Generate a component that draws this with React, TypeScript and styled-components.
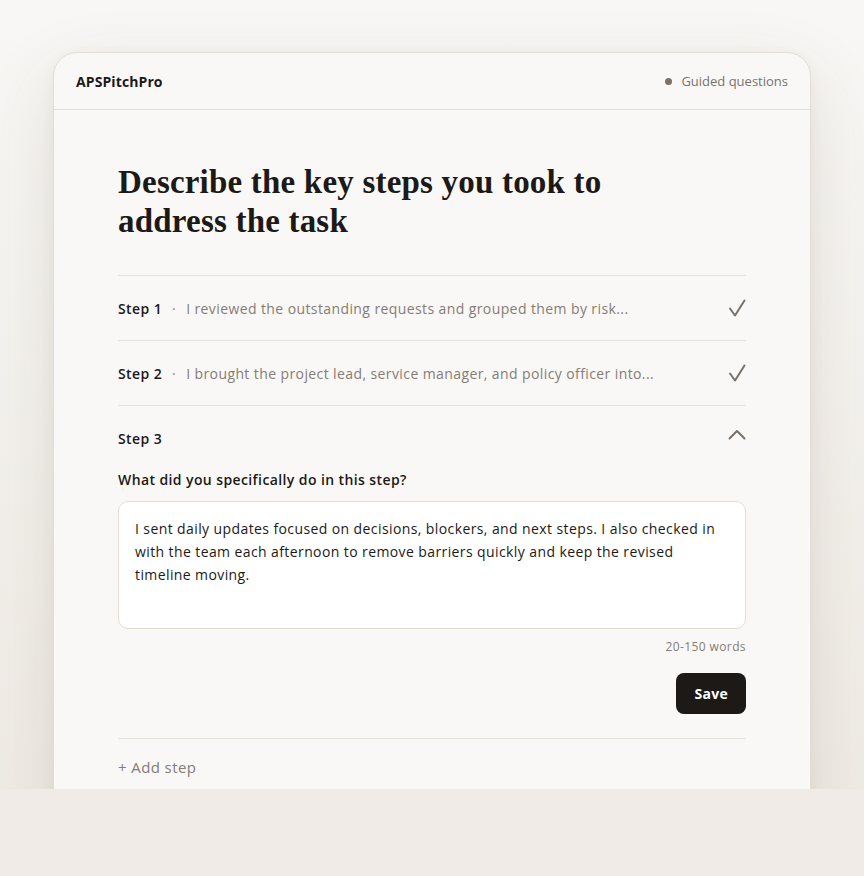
import React from 'react'
import styled, { createGlobalStyle } from 'styled-components'

const GlobalStyle = createGlobalStyle`
  html {
    background: #f0ebe6;
  }
  body {
    margin: 0;
    font-family: 'Open Sans', 'Liberation Sans', sans-serif;
    color: #1c1917;
  }
  * {
    box-sizing: border-box;
  }
`

const steps = [
  { label: 'Step 1', preview: 'I reviewed the outstanding requests and grouped them by risk...' },
  { label: 'Step 2', preview: 'I brought the project lead, service manager, and policy officer into...' },
]

const CheckMark = () => (
  <svg width="18" height="18" viewBox="0 0 18 18" fill="none" stroke="currentColor" strokeWidth="2" strokeLinecap="round" strokeLinejoin="round">
    <path d="M2 9.5 L7 16.5 L16.5 1.5" />
  </svg>
)

const Chevron = () => (
  <svg width="18" height="11" viewBox="0 0 18 11" fill="none" stroke="currentColor" strokeWidth="2" strokeLinecap="round" strokeLinejoin="round">
    <path d="M1.5 9.5 L9 2 L16.5 9.5" />
  </svg>
)

export default function App() {
  return (
    <>
      <GlobalStyle />
      <Page>
        <Card>
          <Header>
            <Brand>APSPitchPro</Brand>
            <Mode>
              <Dot />
              Guided questions
            </Mode>
          </Header>
          <Body>
            <Title>Describe the key steps you took to address the task</Title>
            <StepList>
              {steps.map((step) => (
                <StepRow key={step.label}>
                  <StepLabel>{step.label}</StepLabel>
                  <Sep>·</Sep>
                  <Preview>{step.preview}</Preview>
                  <IconSlot>
                    <CheckMark />
                  </IconSlot>
                </StepRow>
              ))}
              <OpenStep>
                <StepRow as="div" $bare>
                  <StepLabel>Step 3</StepLabel>
                  <Spacer />
                  <IconSlot $up>
                    <Chevron />
                  </IconSlot>
                </StepRow>
                <Question>What did you specifically do in this step?</Question>
                <Answer
                  defaultValue="I sent daily updates focused on decisions, blockers, and next steps. I also checked in with the team each afternoon to remove barriers quickly and keep the revised timeline moving."
                />
                <Counter>20-150 words</Counter>
                <Actions>
                  <SaveButton>Save</SaveButton>
                </Actions>
              </OpenStep>
              <AddStep>+ Add step</AddStep>
            </StepList>
          </Body>
        </Card>
      </Page>
    </>
  )
}

const Page = styled.div`
  height: 789px;
  overflow: hidden;
  padding-top: 52px;
  background: linear-gradient(180deg, #f8f7f5 0%, #f4f2ee 45%, #efebe5 100%);
`

const Card = styled.div`
  width: 758px;
  margin: 0 auto;
  background: #f9f8f6;
  border: 1px solid #e4ddd3;
  border-radius: 24px;
  box-shadow: 0 24px 70px rgba(90, 70, 45, 0.13), 0 4px 14px rgba(90, 70, 45, 0.05);
`

const Header = styled.div`
  display: flex;
  align-items: center;
  justify-content: space-between;
  height: 57px;
  padding: 0 22px;
  border-bottom: 1px solid #e4ddd3;
`

const Brand = styled.div`
  font-size: 14px;
  font-weight: 700;
  letter-spacing: 0.1px;
`

const Mode = styled.div`
  display: flex;
  align-items: center;
  gap: 9px;
  font-size: 13px;
  color: #7a716a;
`

const Dot = styled.span`
  width: 7px;
  height: 7px;
  border-radius: 50%;
  background: #7a716a;
`

const Body = styled.div`
  padding: 53px 64px 80px;
`

const Title = styled.h1`
  margin: 0 0 34px;
  max-width: 520px;
  font-family: 'Liberation Serif', 'DejaVu Serif', serif;
  font-size: 33px;
  line-height: 39px;
  font-weight: 700;
  letter-spacing: 0.2px;
  color: #1c1917;
`

const StepList = styled.div`
  display: flex;
  flex-direction: column;
  letter-spacing: 0.4px;
`

const StepRow = styled.div<{ $bare?: boolean }>`
  display: flex;
  align-items: center;
  height: ${(p) => (p.$bare ? '64px' : '65px')};
  border-top: ${(p) => (p.$bare ? 'none' : '1px solid #e6e1da')};
`

const StepLabel = styled.span`
  font-size: 14px;
  font-weight: 600;
  color: #1c1917;
  white-space: nowrap;
`

const Sep = styled.span`
  margin: 0 10px;
  color: #8a817a;
  font-size: 14px;
`

const Preview = styled.span`
  flex: 1;
  font-size: 14px;
  color: #857c75;
  white-space: nowrap;
  overflow: hidden;
`

const Spacer = styled.span`
  flex: 1;
`

const IconSlot = styled.span<{ $up?: boolean }>`
  display: flex;
  color: #7a716a;
  margin-right: 0;
  margin-top: ${(p) => (p.$up ? '-8px' : '0')};
`

const OpenStep = styled.div`
  display: flex;
  flex-direction: column;
  border-top: 1px solid #e6e1da;
  border-bottom: 1px solid #e6e1da;
  padding-bottom: 24px;
`

const Question = styled.label`
  font-size: 14px;
  line-height: 20px;
  font-weight: 600;
  color: #1c1917;
`

const Answer = styled.textarea`
  margin-top: 11px;
  height: 128px;
  padding: 15px 16px;
  border: 1px solid #e4ddd3;
  border-radius: 10px;
  background: #ffffff;
  font-family: inherit;
  font-size: 14px;
  line-height: 23px;
  letter-spacing: 0.4px;
  color: #1c1917;
  resize: none;
  outline: none;
`

const Counter = styled.div`
  margin-top: 10px;
  text-align: right;
  font-size: 12px;
  line-height: 16px;
  color: #857c75;
`

const Actions = styled.div`
  display: flex;
  justify-content: flex-end;
  margin-top: 18px;
`

const SaveButton = styled.button`
  height: 41px;
  padding: 0 18px;
  border: none;
  border-radius: 8px;
  background: #1c1917;
  color: #ffffff;
  font-family: inherit;
  font-size: 14px;
  font-weight: 700;
  letter-spacing: 0.3px;
  cursor: pointer;
`

const AddStep = styled.button`
  align-self: flex-start;
  padding: 18px 0 0;
  border: none;
  background: none;
  font-family: inherit;
  font-size: 15px;
  line-height: 20px;
  letter-spacing: 0.4px;
  color: #857c75;
  cursor: pointer;
`
